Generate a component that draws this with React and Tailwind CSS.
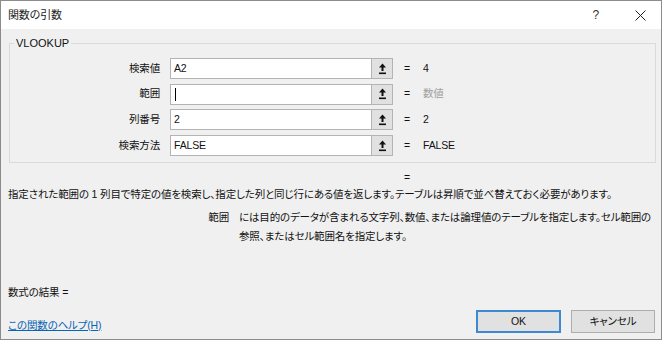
import { useState } from 'react';

const ROWS = [
  { label: '検索値', value: 'A2', result: '4' },
  { label: '範囲', value: '', result: '数値', muted: true, cursor: true },
  { label: '列番号', value: '2', result: '2' },
  { label: '検索方法', value: 'FALSE', result: 'FALSE' },
];

function RefIcon() {
  return (
    <svg width="9" height="12" viewBox="0 0 9 12" fill="#111">
      <path d="M4.5 0.5 L8 4.5 H1 Z" />
      <rect x="3.5" y="4" width="2" height="4" />
      <rect x="1" y="9.5" width="7" height="1.6" />
    </svg>
  );
}

function ArgRow({ row }) {
  const [val, setVal] = useState(row.value);
  return (
    <div className="flex items-center h-[21px]">
      <div className="w-[150px] text-right">{row.label}</div>
      <div className="ml-[10px] w-[202px] h-full bg-white border border-[#b4b4b4] flex items-center pl-[3px] relative">
        <input
          value={val}
          onChange={(e) => setVal(e.target.value)}
          className="w-full bg-transparent outline-none"
        />
        {row.cursor && <span className="absolute left-[4px] top-[3px] w-px h-[13px] bg-black" />}
      </div>
      <button className="w-[21px] h-full bg-[#e1e1e1] border border-l-0 border-[#b4b4b4] flex items-center justify-center">
        <RefIcon />
      </button>
      <span className="ml-[11px] w-[19px]">=</span>
      <span className={row.muted ? 'text-[#a0a0a0]' : ''}>{row.result}</span>
    </div>
  );
}

export default function App() {
  return (
    <div className="w-[665px] h-[344px] bg-white overflow-hidden font-['Liberation_Sans','Noto_Sans_CJK_JP',sans-serif] text-[10.5px] tracking-[-0.15px] text-[#111] [font-feature-settings:'palt']">
      <div className="w-[662px] h-[340px] border border-[#8c8c8c] bg-[#f0f0f0] flex flex-col">
        {/* title bar */}
        <div className="h-[28px] bg-white flex items-center pl-[7px] shrink-0">
          <span className="text-[11px] text-[#222]">関数の引数</span>
          <span className="ml-auto mr-[36px] text-[12px] text-[#333]">?</span>
          <svg width="11" height="11" viewBox="0 0 11 11" className="mr-[15px]" stroke="#222" strokeWidth="1">
            <line x1="0.5" y1="0.5" x2="10.5" y2="10.5" />
            <line x1="10.5" y1="0.5" x2="0.5" y2="10.5" />
          </svg>
        </div>

        {/* argument group */}
        <div className="mt-[14px] ml-[8px] mr-[5px] h-[120px] shrink-0 border border-[#dadada] relative pt-[14px] pb-[5px] flex flex-col gap-[4.7px]">
          <span className="absolute left-[4px] top-[-8px] px-[2px] bg-[#f0f0f0] leading-[14px] text-[11px] tracking-normal">VLOOKUP</span>
          {ROWS.map((r) => (
            <ArgRow key={r.label} row={r} />
          ))}
        </div>

        <div className="mt-[6px] h-[16px] leading-[16px] pl-[403px]">=</div>
        <div className="mt-[1px] h-[16px] leading-[16px] pl-[7px] whitespace-nowrap">
          指定された範囲の 1 列目で特定の値を検索し、指定した列と同じ行にある値を返します。テーブルは昇順で並べ替えておく必要があります。
        </div>

        <div className="mt-[6px] flex leading-[19px] whitespace-nowrap">
          <div className="w-[228px] text-right">範囲</div>
          <div className="ml-[10px]">
            <span className="block">には目的のデータが含まれる文字列、数値、または論理値のテーブルを指定します。セル範囲の</span>
            <span className="block">参照、またはセル範囲名を指定します。</span>
          </div>
        </div>

        <div className="mt-[38px] h-[16px] leading-[16px] pl-[7px]">数式の結果 =</div>

        <div className="mt-[10px] flex items-start pl-[7px] pr-[6px]">
          <a href="#" className="mt-[7px] text-[#0a64b4] underline leading-[16px]">この関数のヘルプ(H)</a>
          <button className="ml-auto w-[85px] h-[23px] bg-[#e1e1e1] border-2 border-[#3c8bd0]">OK</button>
          <button className="ml-[10px] w-[84px] h-[23px] bg-[#e1e1e1] border border-[#adadad]">キャンセル</button>
        </div>
      </div>
    </div>
  );
}
